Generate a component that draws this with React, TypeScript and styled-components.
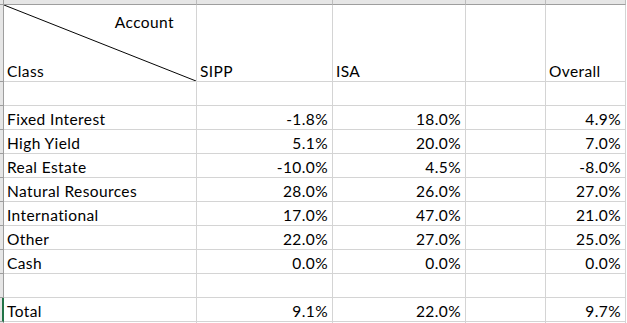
import React from "react";
import styled, { createGlobalStyle } from "styled-components";

const GlobalStyle = createGlobalStyle`
    html, body {
        margin: 0;
        padding: 0;
        background: #ffffff;
        overflow: hidden;
    }
`;

const COLUMNS = "4px 193px 136px 133px 80px 80px 1fr";
const GRID = "#d4d4d4";
const HEADER_LINE = "#9e9e9e";

const Sheet = styled.div`
    width: 627px;
    height: 323px;
    overflow: hidden;
    font-family: Lato, "Open Sans", "Liberation Sans", sans-serif;
    font-size: 15.5px;
    letter-spacing: 0.4px;
    color: #000000;
    -webkit-font-smoothing: antialiased;
`;

const Row = styled.div<{ height: number }>`
    display: grid;
    grid-template-columns: ${COLUMNS};
    height: ${props => props.height}px;
`;

const Gutter = styled.div<{ selected?: boolean }>`
    background: #e6e6e6;
    border-right: ${props => props.selected ? "2px solid #217346" : `1px solid ${HEADER_LINE}`};
    border-bottom: 1px solid ${HEADER_LINE};
`;

const StripCell = styled.div`
    background: #e6e6e6;
    border-right: 1px solid #bdbdbd;
    border-bottom: 1px solid ${HEADER_LINE};
`;

const Cell = styled.div<{ align?: "left" | "right" }>`
    display: flex;
    align-items: flex-end;
    justify-content: ${props => props.align === "right" ? "flex-end" : "flex-start"};
    padding: 0 4px 1px 3px;
    border-right: 1px solid ${GRID};
    border-bottom: 1px solid ${GRID};
    line-height: 18px;
    white-space: nowrap;
    overflow: hidden;
`;

const Filler = styled.div``;

const DiagonalCell = styled.div`
    position: relative;
    display: flex;
    flex-direction: column;
    justify-content: space-between;
    padding: 8px 3px 1px 3px;
    border-right: 1px solid ${GRID};
    border-bottom: 1px solid ${GRID};
    line-height: 18px;
`;

const AccountLabel = styled.span`
    align-self: flex-end;
    padding-right: 19px;
`;

const Slash = styled.svg`
    position: absolute;
    inset: 0;
    width: 100%;
    height: 100%;
    pointer-events: none;
`;

interface IRow {
    label: string;
    sipp: string;
    isa: string;
    overall: string;
}

const rows: IRow[] = [
    { label: "Fixed Interest", sipp: "-1.8%", isa: "18.0%", overall: "4.9%" },
    { label: "High Yield", sipp: "5.1%", isa: "20.0%", overall: "7.0%" },
    { label: "Real Estate", sipp: "-10.0%", isa: "4.5%", overall: "-8.0%" },
    { label: "Natural Resources", sipp: "28.0%", isa: "26.0%", overall: "27.0%" },
    { label: "International", sipp: "17.0%", isa: "47.0%", overall: "21.0%" },
    { label: "Other", sipp: "22.0%", isa: "27.0%", overall: "25.0%" },
    { label: "Cash", sipp: "0.0%", isa: "0.0%", overall: "0.0%" },
];

const EmptyRow: React.FC = () => (
    <Row height={24}>
        <Gutter />
        <Cell /><Cell /><Cell /><Cell /><Cell />
        <Filler />
    </Row>
);

const DataRow: React.FC<{ row: IRow; selected?: boolean }> = ({ row, selected }) => (
    <Row height={24}>
        <Gutter selected={selected} />
        <Cell>{row.label}</Cell>
        <Cell align="right">{row.sipp}</Cell>
        <Cell align="right">{row.isa}</Cell>
        <Cell />
        <Cell align="right">{row.overall}</Cell>
        <Filler />
    </Row>
);

export default function App() {
    return (
        <Sheet>
            <GlobalStyle />
            <Row height={5}>
                <Gutter />
                <StripCell /><StripCell /><StripCell /><StripCell /><StripCell />
                <Filler />
            </Row>
            <Row height={77}>
                <Gutter />
                <DiagonalCell>
                    <Slash viewBox="0 0 193 77" preserveAspectRatio="none">
                        <line x1="0" y1="0" x2="193" y2="77" stroke="#000" strokeWidth="1" />
                    </Slash>
                    <AccountLabel>Account</AccountLabel>
                    <span>Class</span>
                </DiagonalCell>
                <Cell>SIPP</Cell>
                <Cell>ISA</Cell>
                <Cell />
                <Cell>Overall</Cell>
                <Filler />
            </Row>
            <EmptyRow />
            {rows.map(r => <DataRow key={r.label} row={r} />)}
            <EmptyRow />
            <DataRow row={{ label: "Total", sipp: "9.1%", isa: "22.0%", overall: "9.7%" }} selected />
            <Row height={3}>
                <Gutter />
                <Cell /><Cell /><Cell /><Cell /><Cell />
                <Filler />
            </Row>
        </Sheet>
    );
}
